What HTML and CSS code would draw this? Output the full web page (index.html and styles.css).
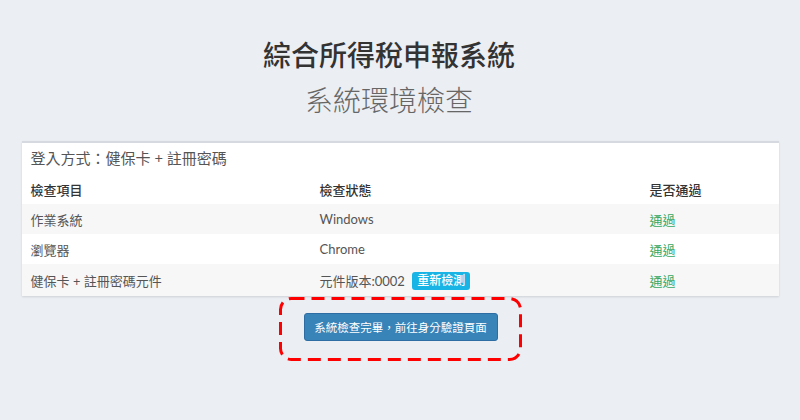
FILE: index.html
```html
<!DOCTYPE html>
<html>
<head>
  <meta charset="UTF-8">
  <title>系統環境檢查</title>
  <link rel="stylesheet" href="styles.css">
</head>
<body>
  <div class="header">
    <h1>綜合所得稅申報系統</h1>
    <h2>系統環境檢查</h2>
  </div>

  <div class="panel">
    <div class="login-type">登入方式：健保卡 + 註冊密碼</div>
    <table class="check-table">
      <colgroup>
        <col class="col-item">
        <col class="col-state">
        <col>
      </colgroup>
      <thead>
        <tr>
          <th>檢查項目</th>
          <th>檢查狀態</th>
          <th>是否通過</th>
        </tr>
      </thead>
      <tbody>
        <tr>
          <td>作業系統</td>
          <td class="value">Windows</td>
          <td class="pass">通過</td>
        </tr>
        <tr>
          <td>瀏覽器</td>
          <td class="value">Chrome</td>
          <td class="pass">通過</td>
        </tr>
        <tr>
          <td>健保卡 + 註冊密碼元件</td>
          <td class="value">元件版本:0002 <span class="badge">重新檢測</span></td>
          <td class="pass">通過</td>
        </tr>
      </tbody>
    </table>
  </div>

  <div class="actions">
    <div class="highlight">
      <button class="btn-primary">系統檢查完畢，前往身分驗證頁面</button>
      <!-- 紅色虛線提示框 -->
      <svg class="dash-frame" width="243" height="64">
        <rect x="1.5" y="1.5" width="240" height="61" rx="11" ry="11" fill="none" stroke="#f00" stroke-width="3" stroke-dasharray="13 7" />
      </svg>
    </div>
  </div>
</body>
</html>
```

FILE: styles.css
```css
body {
  font-family: "Open Sans", "Noto Sans CJK TC", sans-serif;
  margin: 0;
  background-color: #ebeef3;
  color: #333;
}
.header {
  padding-top: 35px;
  padding-right: 22px;
  text-align: center;
}
h1 {
  margin: 0;
  font-size: 28px;
  line-height: 40px;
  font-weight: 500;
  color: #333;
}
h2 {
  margin: 5px 0 0;
  font-size: 28px;
  line-height: 40px;
  font-weight: 300;
  color: #666;
}
.panel {
  width: 757px;
  margin: 21px auto 0;
  background-color: white;
  border-top: 2px solid #d6d9df;
  box-shadow: 0 1px 2px rgba(0, 0, 0, 0.12);
}
.login-type {
  padding: 0 9px;
  height: 31px;
  line-height: 31px;
  font-size: 15px;
  color: #555;
}
.check-table {
  width: 100%;
  border-collapse: collapse;
  table-layout: fixed;
  font-size: 13px;
}
.col-item {
  width: 289px;
}
.col-state {
  width: 330px;
}
.check-table th,
.check-table td {
  padding: 0 9px;
  text-align: left;
  height: 30px;
}
.check-table th {
  font-weight: 500;
  color: #333;
}
.check-table td {
  color: #555;
}
.check-table tbody tr:nth-child(odd) {
  background-color: #f7f7f8;
}
.check-table tbody tr:last-child td {
  height: 32px;
}
.check-table td.value {
  font-family: Lato, "Noto Sans CJK TC", sans-serif;
  font-size: 13px;
  color: #555;
}
.check-table td.pass {
  color: #34a864;
}
.badge {
  display: inline-block;
  margin-left: 4px;
  padding: 0 5px;
  height: 18px;
  line-height: 18px;
  font-family: "Open Sans", "Noto Sans CJK TC", sans-serif;
  font-size: 12px;
  font-weight: 500;
  color: white;
  background-color: #19b4e6;
  border-radius: 3px;
  vertical-align: 1px;
}
.actions {
  text-align: center;
  margin-top: 1px;
}
.highlight {
  position: relative;
  display: inline-block;
  padding: 16px 24px 20px 25px;
}
.dash-frame {
  position: absolute;
  left: 0;
  top: 0;
}
.btn-primary {
  display: block;
  width: 194px;
  height: 28px;
  padding: 0;
  border: 1px solid #2e6da4;
  border-radius: 3px;
  background-color: #3884b9;
  color: white;
  font-family: "Open Sans", "Noto Sans CJK TC", sans-serif;
  font-size: 11.5px;
  cursor: pointer;
}
```
